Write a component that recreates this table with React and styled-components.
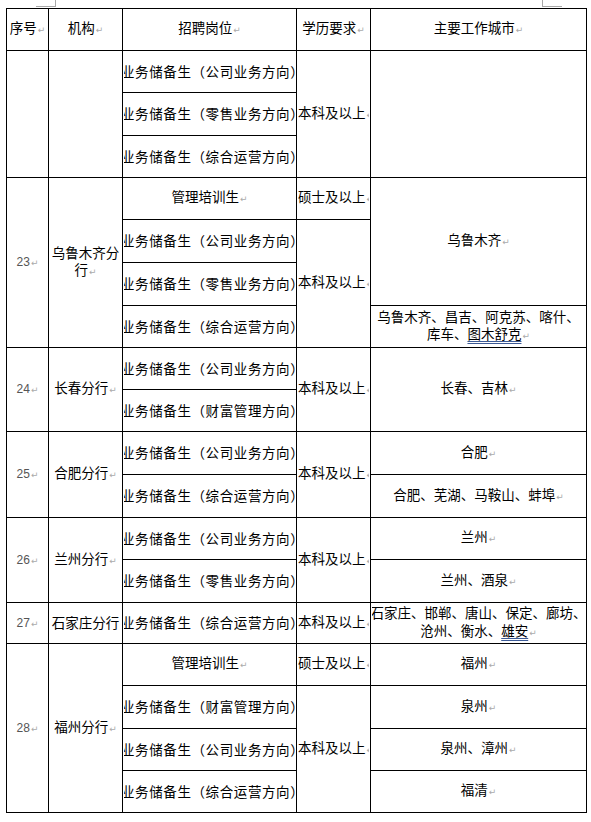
import React from 'react';
import styled, { createGlobalStyle } from 'styled-components';

const GlobalStyle = createGlobalStyle`
  html, body {
    margin: 0;
    padding: 0;
    background: #fff;
  }
  body {
    font-family: "Noto Sans CJK SC", "Noto Sans", sans-serif;
    color: #000;
  }
`;

const Page = styled.div`
  width: 591px;
  height: 822px;
  padding-left: 6px;
  box-sizing: border-box;
  overflow: hidden;
`;

const MarkStrip = styled.div`
  display: flex;
  justify-content: space-between;
  width: 526px;
  height: 8px;
  margin-left: 30px;
`;

const CropMark = styled.div`
  width: 20px;
  height: 7px;
  box-sizing: border-box;
  border-bottom: 1px solid #a8a8a8;
  border-${(p) => (p.side === 'left' ? 'right' : 'left')}: 1px solid #a8a8a8;
`;

const Table = styled.table`
  border-collapse: collapse;
  table-layout: fixed;
  width: 580px;
  font-size: 13.5px;
  line-height: 17.5px;
`;

const Tr = styled.tr`
  height: ${(p) => p.h}px;
`;

const Cell = styled.td`
  border: 1px solid #000;
  padding: 0 1px;
  vertical-align: middle;
  text-align: center;
  font-weight: normal;
`;

const Fit = styled.div`
  display: flex;
  flex-direction: column;
  align-items: ${(p) => (p.align === 'start' ? 'flex-start' : 'center')};
  overflow-x: clip;
  overflow-y: visible;
  white-space: nowrap;
  letter-spacing: ${(p) => p.spacing || 0}px;

  & > span {
    margin-left: ${(p) => p.shift || 0}px;
  }
`;

const Num = styled.span`
  font-family: "Liberation Sans", sans-serif;
  font-size: 12px;
  color: #555;
`;

const Mark = styled.span`
  font-family: "DejaVu Sans", sans-serif;
  font-size: 9px;
  color: #aaa;
  margin-left: 1px;
  letter-spacing: 0;
`;

const Wavy = styled.span`
  text-decoration: underline double #3c5a96;
  text-underline-offset: 2px;
`;

const M = () => <Mark>↵</Mark>;

const Post = ({ dir }) =>
  dir ? (
    <Fit align="start" spacing={0.6} shift={-3}>
      <span>业务储备生（{dir}方向）</span>
    </Fit>
  ) : (
    <Fit>
      <span>
        管理培训生
        <M />
      </span>
    </Fit>
  );

const Lines = ({ lines }) => (
  <Fit>
    {lines.map((l, i) => (
      <span key={i}>
        {l}
        {i === lines.length - 1 && <M />}
      </span>
    ))}
  </Fit>
);

const BK = { t: '本科及以上' };
const SS = { t: '硕士及以上' };

const blocks = [
  {
    no: '',
    org: null,
    rows: [
      { h: 42, post: '公司业务', edu: { ...BK, span: 3 }, city: { lines: null, span: 3 } },
      { h: 43, post: '零售业务' },
      { h: 42, post: '综合运营' },
    ],
  },
  {
    no: '23',
    org: ['乌鲁木齐分', '行'],
    rows: [
      { h: 42, post: null, edu: { ...SS, span: 1 }, city: { lines: ['乌鲁木齐'], span: 3 } },
      { h: 43, post: '公司业务', edu: { ...BK, span: 3 } },
      { h: 43, post: '零售业务' },
      {
        h: 42,
        post: '综合运营',
        city: {
          lines: [
            '乌鲁木齐、昌吉、阿克苏、喀什、',
            <>库车、<Wavy>图木舒克</Wavy></>,
          ],
          span: 1,
        },
      },
    ],
  },
  {
    no: '24',
    org: ['长春分行'],
    rows: [
      { h: 42, post: '公司业务', edu: { ...BK, span: 2 }, city: { lines: ['长春、吉林'], span: 2 } },
      { h: 42, post: '财富管理' },
    ],
  },
  {
    no: '25',
    org: ['合肥分行'],
    rows: [
      { h: 43, post: '公司业务', edu: { ...BK, span: 2 }, city: { lines: ['合肥'], span: 1 } },
      { h: 43, post: '综合运营', city: { lines: ['合肥、芜湖、马鞍山、蚌埠'], span: 1 } },
    ],
  },
  {
    no: '26',
    org: ['兰州分行'],
    rows: [
      { h: 42, post: '公司业务', edu: { ...BK, span: 2 }, city: { lines: ['兰州'], span: 1 } },
      { h: 43, post: '零售业务', city: { lines: ['兰州、酒泉'], span: 1 } },
    ],
  },
  {
    no: '27',
    org: ['石家庄分行'],
    orgBare: true,
    rows: [
      {
        h: 41,
        post: '综合运营',
        edu: { ...BK, span: 1 },
        city: {
          lines: ['石家庄、邯郸、唐山、保定、廊坊、', <>沧州、衡水、<Wavy>雄安</Wavy></>],
          span: 1,
        },
      },
    ],
  },
  {
    no: '28',
    org: ['福州分行'],
    rows: [
      { h: 42, post: null, edu: { ...SS, span: 1 }, city: { lines: ['福州'], span: 1 } },
      { h: 43, post: '财富管理', edu: { ...BK, span: 3 }, city: { lines: ['泉州'], span: 1 } },
      { h: 42, post: '公司业务', city: { lines: ['泉州、漳州'], span: 1 } },
      { h: 42, post: '综合运营', city: { lines: ['福清'], span: 1 } },
    ],
  },
];

const headers = ['序号', '机构', '招聘岗位', '学历要求', '主要工作城市'];

export default function App() {
  return (
    <Page>
      <GlobalStyle />
      <MarkStrip>
        <CropMark side="left" />
        <CropMark side="right" />
      </MarkStrip>
      <Table>
        <colgroup>
          <col style={{ width: 42 }} />
          <col style={{ width: 74 }} />
          <col style={{ width: 174 }} />
          <col style={{ width: 74 }} />
          <col style={{ width: 216 }} />
        </colgroup>
        <tbody>
          <Tr h={42}>
            {headers.map((t) => (
              <Cell as="th" key={t}>
                <Fit>
                  <span>
                    {t}
                    <M />
                  </span>
                </Fit>
              </Cell>
            ))}
          </Tr>
          {blocks.map((b, bi) =>
            b.rows.map((r, ri) => (
              <Tr h={r.h} key={`${bi}-${ri}`}>
                {ri === 0 && (
                  <>
                    <Cell rowSpan={b.rows.length}>
                      {b.no && (
                        <Num>
                          {b.no}
                          <M />
                        </Num>
                      )}
                    </Cell>
                    <Cell rowSpan={b.rows.length}>
                      {b.org &&
                        (b.orgBare ? (
                          <Fit>
                            <span>{b.org[0]}</span>
                          </Fit>
                        ) : (
                          <Lines lines={b.org} />
                        ))}
                    </Cell>
                  </>
                )}
                <Cell>
                  <Post dir={r.post} />
                </Cell>
                {r.edu && (
                  <Cell rowSpan={r.edu.span}>
                    <Fit align="start">
                      <span>
                        {r.edu.t}
                        <M />
                      </span>
                    </Fit>
                  </Cell>
                )}
                {r.city && (
                  <Cell rowSpan={r.city.span}>
                    {r.city.lines && <Lines lines={r.city.lines} />}
                  </Cell>
                )}
              </Tr>
            ))
          )}
        </tbody>
      </Table>
    </Page>
  );
}
